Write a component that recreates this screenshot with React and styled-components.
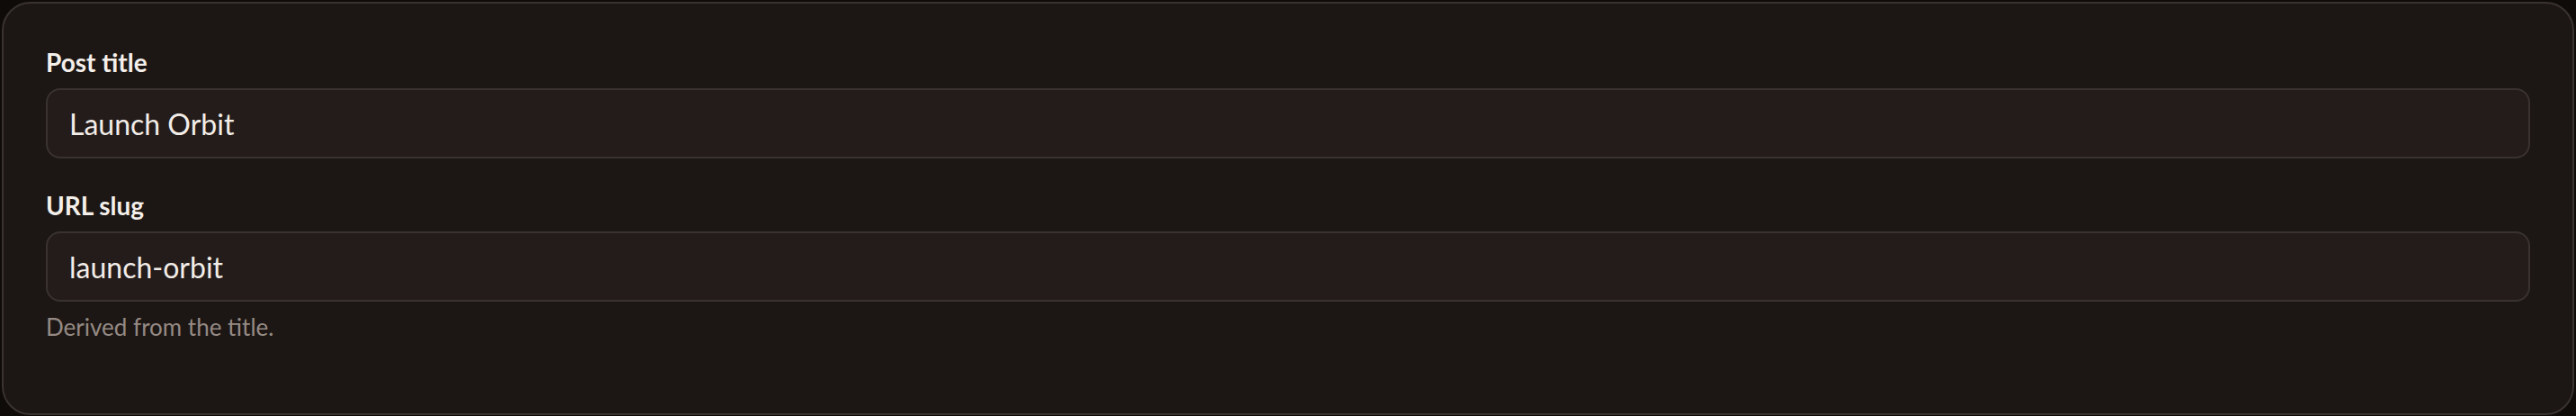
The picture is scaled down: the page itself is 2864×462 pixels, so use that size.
import React from 'react';
import styled, { createGlobalStyle } from 'styled-components';

const GlobalStyle = createGlobalStyle`
  html, body {
    margin: 0;
    padding: 0;
    background: #0e0b09;
  }
  * {
    box-sizing: border-box;
  }
`;

const Page = styled.div`
  padding: 2px 2px 1px 2px;
  font-family: Lato, "Liberation Sans", sans-serif;
`;

const Card = styled.form`
  background: #1c1714;
  border: 2px solid #3a322f;
  border-radius: 32px;
  padding: 45px 47px 78px 47px;
  display: flex;
  flex-direction: column;
`;

const Field = styled.div`
  display: flex;
  flex-direction: column;
  & + & {
    margin-top: 32px;
  }
`;

const Label = styled.label`
  font-size: 28px;
  line-height: 40px;
  font-weight: 700;
  color: #f4efea;
  margin-bottom: 9px;
`;

const Input = styled.input`
  height: 78px;
  width: 100%;
  background: #241c1a;
  border: 2px solid #3a3230;
  border-radius: 16px;
  padding: 0 24px;
  font-family: inherit;
  font-size: 32px;
  color: #f2ede8;
  outline: none;
`;

const Hint = styled.p`
  margin: 10px 0 0 0;
  font-size: 26px;
  line-height: 36px;
  color: #958a84;
`;

export default function App() {
  return (
    <>
      <GlobalStyle />
      <Page>
        <Card onSubmit={(e) => e.preventDefault()}>
          <Field>
            <Label htmlFor="title">Post title</Label>
            <Input id="title" defaultValue="Launch Orbit" />
          </Field>
          <Field>
            <Label htmlFor="slug">URL slug</Label>
            <Input id="slug" defaultValue="launch-orbit" />
            <Hint>Derived from the title.</Hint>
          </Field>
        </Card>
      </Page>
    </>
  );
}
